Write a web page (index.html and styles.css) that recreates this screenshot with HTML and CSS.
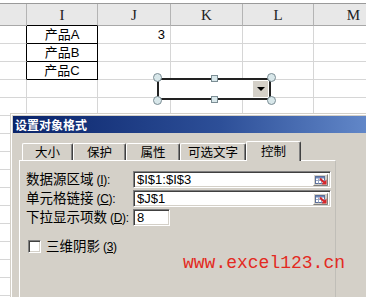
FILE: index.html
```html
<!DOCTYPE html>
<html>
<head>
<meta charset="utf-8">
<link rel="stylesheet" href="styles.css">
</head>
<body>
<div class="sheet">
  <div class="row head">
    <div class="c"></div><div class="c bk-b">I</div><div class="c">J</div><div class="c">K</div><div class="c">L</div><div class="c">M</div>
  </div>
  <div class="row"><div class="c bk-r"></div><div class="c bk-r bk-b">产品A</div><div class="c num">3</div><div class="c"></div><div class="c"></div><div class="c"></div></div>
  <div class="row"><div class="c bk-r"></div><div class="c bk-r bk-b">产品B</div><div class="c"></div><div class="c"></div><div class="c"></div><div class="c"></div></div>
  <div class="row"><div class="c bk-r"></div><div class="c bk-r bk-b">产品C</div><div class="c"></div><div class="c"></div><div class="c"></div><div class="c"></div></div>
  <div class="row"><div class="c"></div><div class="c"></div><div class="c"></div><div class="c"></div><div class="c"></div><div class="c"></div></div>
  <div class="row"><div class="c"></div><div class="c"></div><div class="c"></div><div class="c"></div><div class="c"></div><div class="c"></div></div>
  <div class="row"><div class="c"></div><div class="c"></div><div class="c"></div><div class="c"></div><div class="c"></div><div class="c"></div></div>
  <div class="row"><div class="c"></div><div class="c"></div><div class="c"></div><div class="c"></div><div class="c"></div><div class="c"></div></div>
  <div class="row"><div class="c"></div><div class="c"></div><div class="c"></div><div class="c"></div><div class="c"></div><div class="c"></div></div>
  <div class="row"><div class="c"></div><div class="c"></div><div class="c"></div><div class="c"></div><div class="c"></div><div class="c"></div></div>
  <div class="row"><div class="c"></div><div class="c"></div><div class="c"></div><div class="c"></div><div class="c"></div><div class="c"></div></div>
  <div class="row"><div class="c"></div><div class="c"></div><div class="c"></div><div class="c"></div><div class="c"></div><div class="c"></div></div>
  <div class="row"><div class="c"></div><div class="c"></div><div class="c"></div><div class="c"></div><div class="c"></div><div class="c"></div></div>
  <div class="row"><div class="c"></div><div class="c"></div><div class="c"></div><div class="c"></div><div class="c"></div><div class="c"></div></div>
  <div class="row"><div class="c"></div><div class="c"></div><div class="c"></div><div class="c"></div><div class="c"></div><div class="c"></div></div>
  <div class="row"><div class="c"></div><div class="c"></div><div class="c"></div><div class="c"></div><div class="c"></div><div class="c"></div></div>
</div>

<div class="sel">
  <div class="combo"><div class="combo-btn"><span class="tri"></span></div></div>
  <span class="handle h-tl"></span><span class="handle h-tr"></span>
  <span class="handle h-bl"></span><span class="handle h-br"></span>
  <span class="sq sq-t"></span><span class="sq sq-b"></span>
</div>

<div class="dialog">
  <div class="titlebar">设置对象格式</div>
  <div class="tabs">
    <div class="tab w1">大小</div>
    <div class="tab w2">保护</div>
    <div class="tab w3">属性</div>
    <div class="tab w4">可选文字</div>
    <div class="tab w5 active">控制</div>
  </div>
  <div class="panel">
    <div class="field">
      <div class="label">数据源区域<span class="acc">(<u>I</u>):</span></div>
      <div class="input wide"><span>$I$1:$I$3</span>
        <svg class="ref" viewBox="0 0 15 12" width="15" height="12">
          <rect x="0" y="0" width="15" height="12" fill="#d4d0c8"/>
          <path d="M0.5 11.5V0.5H14.5" stroke="#fff" fill="none"/>
          <path d="M0.5 11.5H14.5V0.5" stroke="#808080" fill="none"/>
          <rect x="2.5" y="2.5" width="9" height="7" fill="#fff" stroke="#5a6f9a"/>
          <rect x="3" y="3" width="8" height="1.5" fill="#6d86b8"/>
          <path d="M5.5 4.5V9.5M8.5 4.5V9.5M3 6.5H11.5" stroke="#9aa8c4"/>
          <path d="M7 4.5L11 8.5" stroke="#d8262a" stroke-width="2"/>
          <path d="M13.5 10.5H8.5L13.5 5.5Z" fill="#d8262a"/>
        </svg>
      </div>
    </div>
    <div class="field">
      <div class="label">单元格链接<span class="acc">(<u>C</u>):</span></div>
      <div class="input wide"><span>$J$1</span>
        <svg class="ref" viewBox="0 0 15 12" width="15" height="12">
          <rect x="0" y="0" width="15" height="12" fill="#d4d0c8"/>
          <path d="M0.5 11.5V0.5H14.5" stroke="#fff" fill="none"/>
          <path d="M0.5 11.5H14.5V0.5" stroke="#808080" fill="none"/>
          <rect x="2.5" y="2.5" width="9" height="7" fill="#fff" stroke="#5a6f9a"/>
          <rect x="3" y="3" width="8" height="1.5" fill="#6d86b8"/>
          <path d="M5.5 4.5V9.5M8.5 4.5V9.5M3 6.5H11.5" stroke="#9aa8c4"/>
          <path d="M7 4.5L11 8.5" stroke="#d8262a" stroke-width="2"/>
          <path d="M13.5 10.5H8.5L13.5 5.5Z" fill="#d8262a"/>
        </svg>
      </div>
    </div>
    <div class="field">
      <div class="label">下拉显示项数<span class="acc">(<u>D</u>):</span></div>
      <div class="input narrow"><span>8</span></div>
    </div>
    <div class="check"><span class="box"></span><span class="check-label">三维阴影<span class="acc">(<u>3</u>)</span></span></div>
  </div>
</div>

<div class="watermark">www.excel123.cn</div>
</body>
</html>
```

FILE: styles.css
```css
* { box-sizing: border-box; }
html, body { margin: 0; padding: 0; }
body {
  width: 366px;
  height: 297px;
  overflow: hidden;
  position: relative;
  background: #fff;
  font-family: "Liberation Sans", "Noto Sans CJK SC", sans-serif;
  color: #000;
}

/* spreadsheet */
.sheet { margin-top: 3px; border-top: 1px solid #9a9a9a; }
.row {
  display: grid;
  grid-template-columns: 27px 71px 73px 72px 71px 80px;
  height: 18px;
}
.row.head { height: 22px; background: #e8e8e8; }
.c {
  border-right: 1px solid #d6d6d6;
  border-bottom: 1px solid #d6d6d6;
  font-size: 13px;
  line-height: 17px;
  text-align: center;
  white-space: nowrap;
  overflow: hidden;
}
.head .c {
  border-right-color: #b4b4b4;
  border-bottom-color: #a8a8a8;
  font-family: "Liberation Serif", serif;
  font-size: 15px;
  line-height: 20px;
  padding-top: 1px;
  color: #222;
}
.c.bk-r { border-right-color: #000; }
.c.bk-b, .head .c.bk-b { border-bottom-color: #000; }
.c.num { text-align: right; padding-right: 5px; }

/* selected combo box control */
.sel {
  position: absolute;
  left: 157px;
  top: 78px;
  width: 114px;
  height: 22px;
}
.combo {
  width: 100%;
  height: 100%;
  border: 2px solid #222;
  background: #fff;
  display: flex;
  justify-content: flex-end;
  padding: 1px;
}
.combo-btn {
  width: 15px;
  background: #d4d0c8;
  display: flex;
  align-items: center;
  justify-content: center;
}
.tri {
  width: 0;
  height: 0;
  border-left: 4px solid transparent;
  border-right: 4px solid transparent;
  border-top: 4px solid #000;
}
.handle {
  position: absolute;
  width: 9px;
  height: 9px;
  border-radius: 50%;
  background: #d8e7ea;
  border: 1px solid #7b8d94;
}
.h-tl { left: -4px; top: -5px; }
.h-tr { right: -5px; top: -5px; }
.h-bl { left: -4px; bottom: -5px; }
.h-br { right: -5px; bottom: -5px; }
.sq {
  position: absolute;
  width: 7px;
  height: 7px;
  background: #d8e7ea;
  border: 1px solid #7b8d94;
  left: 54px;
}
.sq-t { top: -3px; }
.sq-b { bottom: -3px; }

/* dialog */
.dialog {
  position: absolute;
  left: 10px;
  top: 113px;
  width: 380px;
  height: 200px;
  background: #d4d0c8;
  border-top: 1px solid #d4d0c8;
  border-left: 1px solid #d4d0c8;
  box-shadow: inset 1px 1px #fff;
  padding: 2px 0 0 2px;
}
.titlebar {
  height: 17px;
  background: linear-gradient(to right, #0a246a, #2d4f98 55%, #6a90d0);
  color: #fff;
  font-weight: bold;
  font-size: 12px;
  line-height: 17px;
  padding-left: 2px;
  font-family: "Noto Sans CJK SC", sans-serif;
}
.tabs {
  display: flex;
  align-items: flex-end;
  height: 19px;
  margin: 8px 0 0 9px;
  position: relative;
  z-index: 1;
}
.tab {
  height: 17px;
  border-top: 1px solid #fff;
  border-left: 1px solid #fff;
  border-right: 1px solid #404040;
  box-shadow: inset -1px 0 #808080;
  border-radius: 2px 2px 0 0;
  font-size: 12.5px;
  line-height: 15px;
  text-align: center;
  font-family: "Noto Sans CJK SC", sans-serif;
  background: #d4d0c8;
}
.tab.active { height: 20px; margin-bottom: -1px; line-height: 17px; }
.w1 { width: 51px; }
.w2 { width: 53px; }
.w3 { width: 54px; }
.w4 { width: 66px; }
.w5 { width: 55px; }

.panel {
  margin-left: 6px;
  width: 317px;
  height: 200px;
  border-top: 1px solid #fff;
  border-left: 1px solid #fff;
  border-right: 1px solid #c0beb8;
  padding: 10px 0 0 6px;
  display: flex;
  flex-direction: column;
  gap: 2px;
}
.field { display: flex; align-items: center; height: 17px; }
.label {
  width: 107px;
  font-size: 13.5px;
  white-space: nowrap;
  line-height: 17px;
}
.acc {
  font-size: 12px;
  margin-left: 3px;
  letter-spacing: -0.3px;
}
.input {
  height: 17px;
  background: #fff;
  border: 1px solid;
  border-color: #808080 #fff #fff #808080;
  box-shadow: inset 1px 1px #404040, inset -1px -1px #d4d0c8;
  font-size: 13px;
  line-height: 15px;
  padding-left: 3px;
  display: flex;
  align-items: center;
  justify-content: space-between;
}
.input.wide { width: 198px; }
.input.narrow { width: 37px; }
.ref { width: 15px; height: 12px; margin-right: 2px; display: block; }

.check { display: flex; align-items: center; margin-top: 12px; height: 13px; }
.box {
  width: 13px;
  height: 13px;
  margin-left: 2px;
  background: #fff;
  border: 1px solid;
  border-color: #808080 #fff #fff #808080;
  box-shadow: inset 1px 1px #404040, inset -1px -1px #d4d0c8;
}
.check-label { margin-left: 5px; font-size: 13.5px; line-height: 17px; white-space: nowrap; }

.watermark {
  position: absolute;
  left: 183px;
  top: 253px;
  font-family: "Liberation Mono", monospace;
  font-size: 18px;
  line-height: 20px;
  color: #e32a22;
  white-space: nowrap;
}
```
